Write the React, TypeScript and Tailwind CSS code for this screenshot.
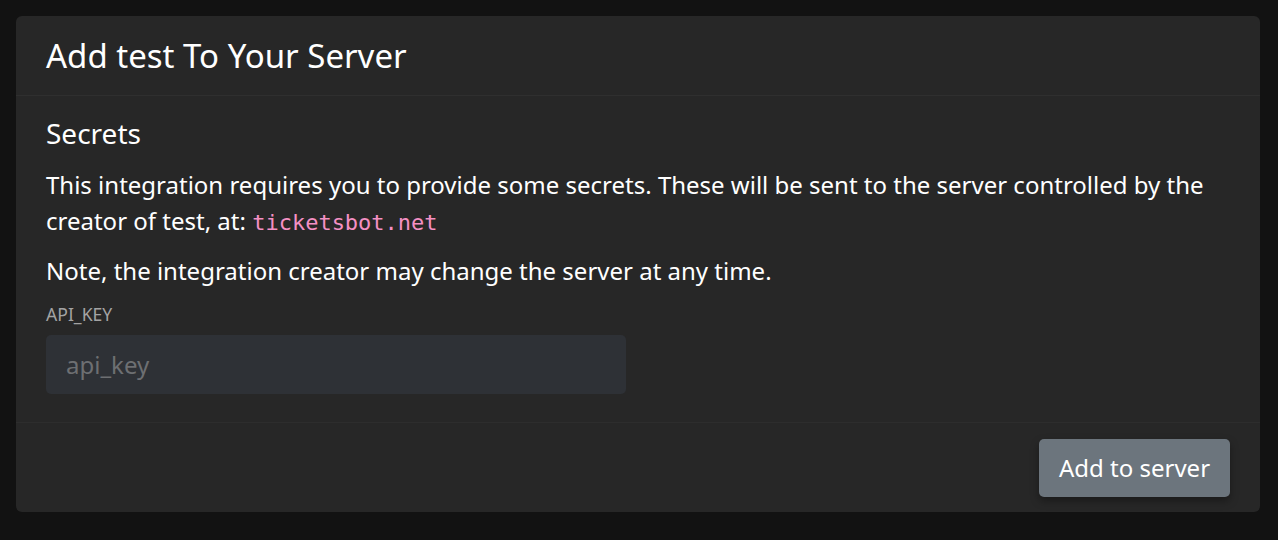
import React from "react";

export default function App() {
  return (
    <div
      className="w-[1278px] h-[540px] bg-[#121212] pt-4 pl-4"
      style={{ fontFamily: '"Noto Sans", sans-serif' }}
    >
      <div className="bg-[#272727] rounded-md w-[1244px] h-[496px] flex flex-col">
        <div className="h-[80px] px-[30px] flex items-center border-b border-[#2f2f2f]">
          <h1 className="text-[33px] text-white leading-none">Add test To Your Server</h1>
        </div>
        <div className="px-[30px] pt-[19px] flex flex-col h-[327px] border-b border-[#2d2d2d]">
          <h2 className="text-[28px] text-white leading-[36px]">Secrets</h2>
          <p className="mt-[16px] text-[24px] leading-[36px] text-white">
            This integration requires you to provide some secrets. These will be sent to the server controlled by the
            creator of test, at:{" "}
            <code
              className="text-[#f490c4] text-[22px] leading-none"
              style={{ fontFamily: '"DejaVu Sans Mono", monospace' }}
            >
              ticketsbot.net
            </code>
          </p>
          <p className="mt-[14px] text-[24px] leading-[36px] text-white">
            Note, the integration creator may change the server at any time.
          </p>
          <label className="mt-[13px] text-[17.6px] text-[#a3a3a3] leading-[24px]">API_KEY</label>
          <input
            className="mt-[9px] w-[580px] h-[59px] bg-[#2e3136] rounded-[5px] px-5 text-[24px] text-white placeholder:text-[#6d6f72] outline-none"
            placeholder="api_key"
          />
        </div>
        <div className="flex-1 flex items-center justify-end px-[30px]">
          <button className="bg-[#6c757d] text-white text-[24px] rounded-[5px] w-[191px] h-[58px] shadow-[0_4px_8px_rgba(0,0,0,0.35)]">
            Add to server
          </button>
        </div>
      </div>
    </div>
  );
}
